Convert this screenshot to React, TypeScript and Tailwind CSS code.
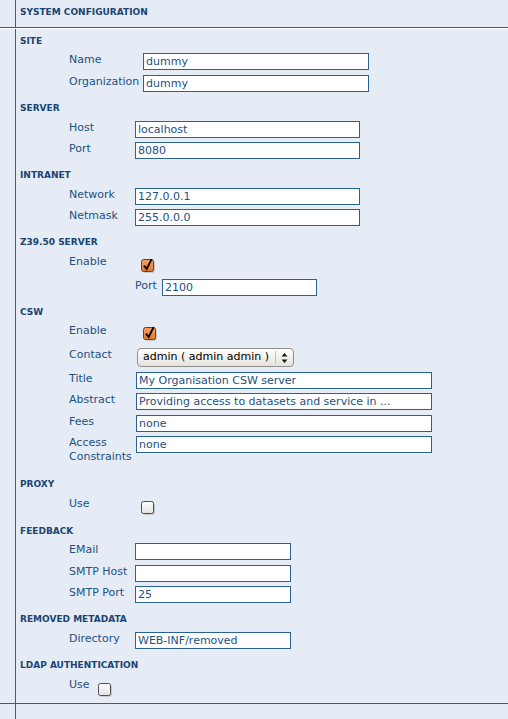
import React from "react";

const LINE = "border-[#2b6296]";

function SectionHeader({ children }: { children: React.ReactNode }) {
  return (
    <div className="h-[24.3px] shrink-0 pl-[4px] pt-[6.5px] text-[9px] font-bold leading-[11px] text-[#1b4373]">
      {children}
    </div>
  );
}

function Label({ w, children, extra = "" }: { w: string; children: React.ReactNode; extra?: string }) {
  return (
    <div className={`${w} ${extra} shrink-0 text-[11px] leading-[13.4px] text-[#245081]`}>
      {children}
    </div>
  );
}

function TextBox({ w, value }: { w: string; value: string }) {
  return (
    <input
      readOnly
      value={value}
      className={`${w} block h-[17px] shrink-0 border border-[#2b6296] bg-white pl-[2px] text-[11px] leading-[15px] text-[#245081] outline-none`}
    />
  );
}

function Box({ checked }: { checked: boolean }) {
  return (
    <svg width="15" height="15" viewBox="0 0 15 15" className="block">
      <defs>
        <linearGradient id="cbOrange" x1="0" y1="0" x2="0" y2="1">
          <stop offset="0" stopColor="#f6a062" />
          <stop offset="1" stopColor="#e4772c" />
        </linearGradient>
        <linearGradient id="cbGray" x1="0" y1="0" x2="0" y2="1">
          <stop offset="0" stopColor="#ffffff" />
          <stop offset="1" stopColor="#e2e2e2" />
        </linearGradient>
      </defs>
      <rect x="1.8" y="2.8" width="12" height="12" rx="2" fill="#9a9a9a" opacity="0.55" />
      <rect
        x="0.5"
        y="1.5"
        width="12"
        height="12"
        rx="2"
        fill={checked ? "url(#cbOrange)" : "url(#cbGray)"}
        stroke={checked ? "#6b4320" : "#4d4d4d"}
      />
      {checked && (
        <path d="M3 7.6 L5.7 11 L10.6 1.2" stroke="#000" strokeWidth="1.9" fill="none" strokeLinejoin="miter" />
      )}
    </svg>
  );
}

function Row({ h, children }: { h: string; children: React.ReactNode }) {
  return <div className={`${h} flex shrink-0 items-start`}>{children}</div>;
}

export default function App() {
  return (
    <div className="flex min-h-[719px] flex-col bg-[#e5ecf5] font-['DejaVu_Sans',sans-serif]">
      {/* top title band */}
      <div className={`flex h-[28px] shrink-0 border-b ${LINE}`}>
        <div className={`w-[16px] shrink-0 border-r ${LINE}`} />
        <div className="pl-[4px] pt-[6.5px] text-[9px] font-bold leading-[11px] text-[#1b4373]">
          SYSTEM CONFIGURATION
        </div>
      </div>
      <div className="h-px shrink-0 bg-white" />

      {/* content band */}
      <div className="flex flex-1">
        <div className={`w-[16px] shrink-0 border-r ${LINE}`} />
        <div className="flex flex-1 flex-col">
          <SectionHeader>SITE</SectionHeader>
          <Row h="h-[21.5px]">
            <Label w="w-[127px]" extra="pl-[53px]">Name</Label>
            <TextBox w="w-[226px]" value="dummy" />
          </Row>
          <Row h="h-[21.5px]">
            <Label w="w-[127px]" extra="pl-[53px]">Organization</Label>
            <TextBox w="w-[226px]" value="dummy" />
          </Row>

          <SectionHeader>SERVER</SectionHeader>
          <Row h="h-[21.5px]">
            <Label w="w-[119px]" extra="pl-[53px]">Host</Label>
            <TextBox w="w-[225px]" value="localhost" />
          </Row>
          <Row h="h-[21.5px]">
            <Label w="w-[119px]" extra="pl-[53px]">Port</Label>
            <TextBox w="w-[225px]" value="8080" />
          </Row>

          <SectionHeader>INTRANET</SectionHeader>
          <Row h="h-[21.5px]">
            <Label w="w-[119px]" extra="pl-[53px]">Network</Label>
            <TextBox w="w-[225px]" value="127.0.0.1" />
          </Row>
          <Row h="h-[21.5px]">
            <Label w="w-[119px]" extra="pl-[53px]">Netmask</Label>
            <TextBox w="w-[225px]" value="255.0.0.0" />
          </Row>

          <SectionHeader>Z39.50 SERVER</SectionHeader>
          <Row h="h-[23.5px]">
            <Label w="w-[119px]" extra="pl-[53px]">Enable</Label>
            <div className="ml-[6px] mt-[3px]">
              <Box checked />
            </div>
          </Row>
          <Row h="h-[21.5px]">
            <Label w="w-[146px]" extra="pl-[119px]">Port</Label>
            <TextBox w="w-[155px]" value="2100" />
          </Row>

          <SectionHeader>CSW</SectionHeader>
          <Row h="h-[24px]">
            <Label w="w-[120px]" extra="pl-[53px]">Enable</Label>
            <div className="ml-[7px] mt-[2px]">
              <Box checked />
            </div>
          </Row>
          <Row h="h-[24px]">
            <Label w="w-[120px]" extra="pl-[53px]">Contact</Label>
            <div className="ml-[1px] flex h-[19px] w-[157px] shrink-0 rounded-[4px] border border-[#8f8f8f] bg-linear-to-b from-[#fefefd] to-[#e6e3dc]">
              <span className="w-[137px] shrink-0 pl-[5px] text-[11px] leading-[15px] text-black">
                admin ( admin admin )
              </span>
              <span className="my-[2px] flex flex-1 items-center justify-center border-l border-[#c4c1bb]">
                <svg width="7" height="12" viewBox="0 0 7 12" className="block">
                  <path d="M3.5 1 L6.5 4.6 L0.5 4.6 Z" fill="#1a1a1a" />
                  <path d="M0.5 7.4 L6.5 7.4 L3.5 11 Z" fill="#1a1a1a" />
                </svg>
              </span>
            </div>
          </Row>
          <Row h="h-[21px]">
            <Label w="w-[120px]" extra="pl-[53px]">Title</Label>
            <TextBox w="w-[296px]" value="My Organisation CSW server" />
          </Row>
          <Row h="h-[22px]">
            <Label w="w-[120px]" extra="pl-[53px]">Abstract</Label>
            <TextBox w="w-[296px]" value="Providing access to datasets and service in ..." />
          </Row>
          <Row h="h-[21px]">
            <Label w="w-[120px]" extra="pl-[53px]">Fees</Label>
            <TextBox w="w-[296px]" value="none" />
          </Row>
          <Row h="h-[36px]">
            <Label w="w-[120px]" extra="pl-[53px]">
              Access
              <br />
              Constraints
            </Label>
            <TextBox w="w-[296px]" value="none" />
          </Row>

          <SectionHeader>PROXY</SectionHeader>
          <Row h="h-[22.3px]">
            <Label w="w-[119px]" extra="pl-[53px]">Use</Label>
            <div className="ml-[6px] mt-[3px]">
              <Box checked={false} />
            </div>
          </Row>

          <SectionHeader>FEEDBACK</SectionHeader>
          <Row h="h-[21.5px]">
            <Label w="w-[119px]" extra="pl-[53px]">EMail</Label>
            <TextBox w="w-[156px]" value="" />
          </Row>
          <Row h="h-[21.5px]">
            <Label w="w-[119px]" extra="pl-[53px]">SMTP Host</Label>
            <TextBox w="w-[156px]" value="" />
          </Row>
          <Row h="h-[21.5px]">
            <Label w="w-[119px]" extra="pl-[53px]">SMTP Port</Label>
            <TextBox w="w-[156px]" value="25" />
          </Row>

          <SectionHeader>REMOVED METADATA</SectionHeader>
          <Row h="h-[21.5px]">
            <Label w="w-[119px]" extra="pl-[53px]">Directory</Label>
            <TextBox w="w-[156px]" value="WEB-INF/removed" />
          </Row>

          <SectionHeader>LDAP AUTHENTICATION</SectionHeader>
          <Row h="h-[22px]">
            <Label w="w-[82px]" extra="pl-[53px]">Use</Label>
            <div className="mt-[4px]">
              <Box checked={false} />
            </div>
          </Row>
        </div>
      </div>

      {/* bottom band */}
      <div className={`flex h-[16px] shrink-0 border-t ${LINE}`}>
        <div className={`w-[16px] shrink-0 border-r ${LINE}`} />
      </div>
    </div>
  );
}
